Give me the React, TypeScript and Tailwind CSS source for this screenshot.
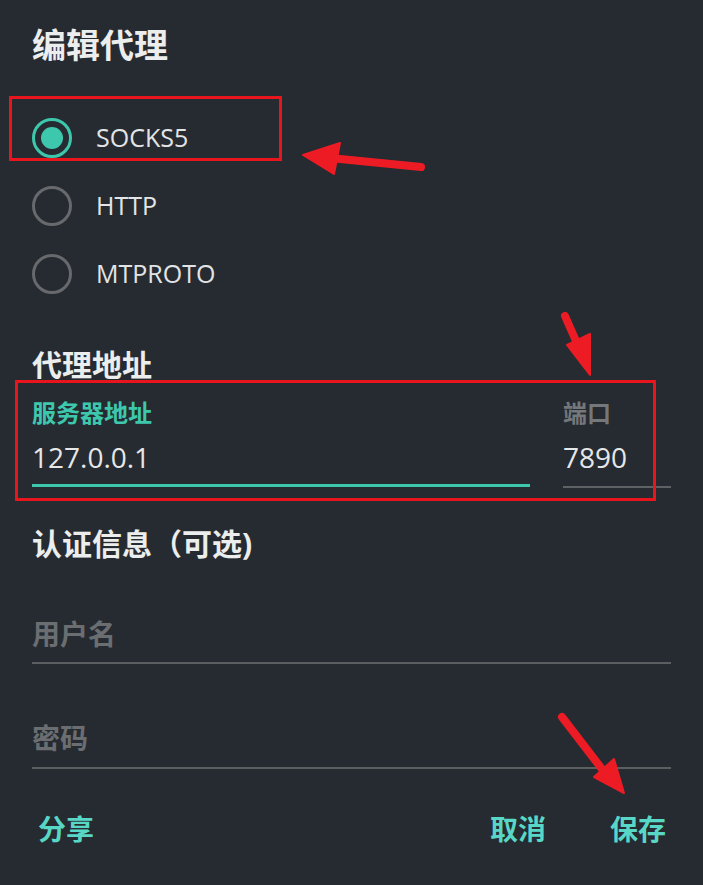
import React, { useState } from 'react';

const protocols = ['SOCKS5', 'HTTP', 'MTPROTO'];

const font = { fontFamily: '"Open Sans", "Noto Sans CJK SC", sans-serif' };

export default function App() {
  const [proto, setProto] = useState('SOCKS5');
  const [host, setHost] = useState('127.0.0.1');
  const [port, setPort] = useState('7890');

  return (
    <div className="relative w-[703px] h-[885px] overflow-hidden bg-[#262b31] text-[#e6e7e8]" style={font}>
      <div className="px-8 pt-[23px]">
        <h1 className="text-[34px] leading-[44px] font-bold text-[#eceded]">编辑代理</h1>

        {/* Protocol radios */}
        <div className="mt-[37px] flex flex-col">
          {protocols.map((p) => (
            <button
              key={p}
              type="button"
              onClick={() => setProto(p)}
              className="h-[68px] flex items-center gap-[24px] text-left"
            >
              <span
                className={`w-[40px] h-[40px] rounded-full border-[3px] flex items-center justify-center ${
                  proto === p ? 'border-[#3dc8ad]' : 'border-[#67696c]'
                }`}
              >
                {proto === p && <span className="w-[22px] h-[22px] rounded-full bg-[#3dc8ad]" />}
              </span>
              <span className="text-[25px] text-[#e3e4e5]">{p}</span>
            </button>
          ))}
        </div>

        {/* Address */}
        <h2 className="mt-[37px] text-[30px] leading-[40px] font-bold text-[#eceded]">代理地址</h2>
        <div className="mt-[12px] flex gap-[33px]">
          <div className="flex-1 flex flex-col">
            <label className="text-[24px] leading-[32px] font-bold text-[#3dc8ad]">服务器地址</label>
            <input
              value={host}
              onChange={(e) => setHost(e.target.value)}
              className="mt-[9px] h-[38px] bg-transparent text-[28px] text-[#e6e7e8] outline-none"
            />
            <div className="mt-[8px] h-[3px] bg-[#3dc8ad]" />
          </div>
          <div className="w-[108px] flex flex-col">
            <label className="text-[24px] leading-[32px] font-bold text-[#75787b]">端口</label>
            <input
              value={port}
              onChange={(e) => setPort(e.target.value)}
              className="mt-[9px] h-[38px] bg-transparent text-[28px] text-[#e6e7e8] outline-none"
            />
            <div className="mt-[10px] h-[2px] bg-[#5f6265]" />
          </div>
        </div>

        {/* Auth */}
        <h2 className="mt-[36px] text-[30px] leading-[40px] font-bold text-[#eceded]">认证信息（可选)</h2>
        <div className="mt-[51px]">
          <input
            placeholder="用户名"
            className="w-full h-[38px] bg-transparent text-[28px] font-bold text-[#e6e7e8] placeholder-[#6b6e71] outline-none"
          />
          <div className="mt-[9px] h-[2px] bg-[#5c5f62]" />
        </div>
        <div className="mt-[55px]">
          <input
            type="password"
            placeholder="密码"
            className="w-full h-[38px] bg-transparent text-[28px] font-bold text-[#e6e7e8] placeholder-[#6b6e71] outline-none"
          />
          <div className="mt-[10px] h-[2px] bg-[#5c5f62]" />
        </div>

        {/* Actions */}
        <div className="mt-[41px] flex items-center text-[28px] leading-[38px] font-bold text-[#58d6c6]">
          <button type="button" className="ml-[6px]">分享</button>
          <div className="flex-1" />
          <button type="button" className="mr-[64px]">取消</button>
          <button type="button" className="mr-[5px]">保存</button>
        </div>
      </div>

      {/* Annotation overlays */}
      <div className="absolute left-[9px] top-[96px] w-[273px] h-[65px] border-[3px] border-[#e8151d] pointer-events-none" />
      <div className="absolute left-[15px] top-[380px] w-[641px] h-[121px] border-[3px] border-[#e8151d] pointer-events-none" />
      <svg className="absolute left-0 top-0 pointer-events-none" width="703" height="885">
        <g fill="#ed1c24" stroke="#ed1c24" strokeLinecap="round">
          <line x1="421" y1="167" x2="330" y2="158" strokeWidth="8" />
          <polygon points="303,155 340,143 334,174" strokeWidth="2" strokeLinejoin="round" />
          <line x1="565" y1="316" x2="580" y2="350" strokeWidth="8" />
          <polygon points="590,375 567,345 590,334" strokeWidth="2" strokeLinejoin="round" />
          <line x1="562" y1="717" x2="605" y2="773" strokeWidth="8" />
          <polygon points="624,793 594,777 614,759" strokeWidth="2" strokeLinejoin="round" />
        </g>
      </svg>
    </div>
  );
}
